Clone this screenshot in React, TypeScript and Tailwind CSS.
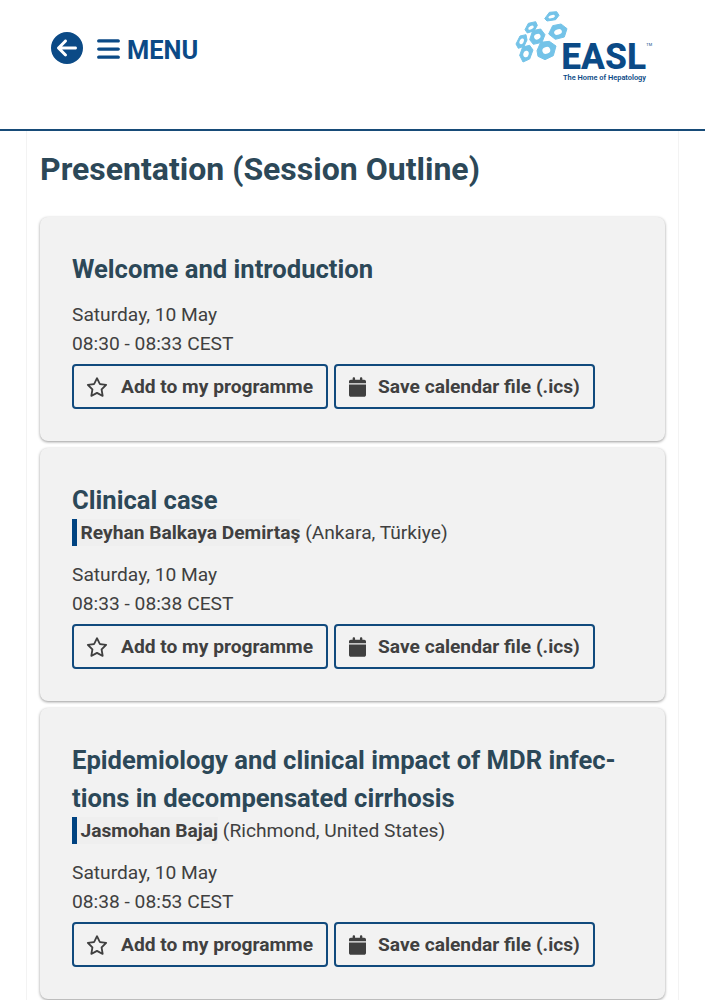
import { FaBars, FaCalendar, FaCircleArrowLeft, FaRegStar } from 'react-icons/fa6'

type Presentation = {
  id: number
  titleLines: string[]
  speaker?: string
  location?: string
  date: string
  time: string
}

const presentations: Presentation[] = [
  { id: 1, titleLines: ['Welcome and introduction'], date: 'Saturday, 10 May', time: '08:30 - 08:33 CEST' },
  { id: 2, titleLines: ['Clinical case'], speaker: 'Reyhan Balkaya Demirtaş', location: 'Ankara, Türkiye', date: 'Saturday, 10 May', time: '08:33 - 08:38 CEST' },
  {
    id: 3,
    titleLines: ['Epidemiology and clinical impact of MDR infec-', 'tions in decompensated cirrhosis'],
    speaker: 'Jasmohan Bajaj',
    location: 'Richmond, United States',
    date: 'Saturday, 10 May',
    time: '08:38 - 08:53 CEST',
  },
]

function Logo() {
  return (
    <svg viewBox="0 0 510 300" className="w-[170px] h-[100px]" role="img" aria-label="EASL">
      {/* Liver cell hexagons */}
      <g transform="translate(36 24)">
        <g fill="#74c3e8" stroke="#74c3e8" strokeWidth="3" strokeLinejoin="round">
          <path d="M98 32 112 13 134 11 141 22 131 35 105 39Z" />
          <path d="M39 65 49 46 71 41 76 52 67 68 46 75Z" />
          <path d="M110 78 122 53 147 48 165 62 157 87 130 94Z" />
          <path d="M53 95 62 68 86 63 99 80 90 103 64 109Z" />
          <path d="M12 108 24 84 42 80 45 96 36 115 19 121Z" />
          <path d="M75 128 86 103 112 100 132 114 124 143 99 155 78 145Z" />
          <path d="M23 142 32 117 53 112 63 126 53 153 33 162Z" />
        </g>
        <g fill="#fff">
          <ellipse cx="119" cy="26" rx="10" ry="4.5" transform="rotate(-18 119 26)" />
          <ellipse cx="57" cy="59" rx="9" ry="5" transform="rotate(-30 57 59)" />
          <ellipse cx="138" cy="72" rx="12" ry="8" transform="rotate(-20 138 72)" />
          <ellipse cx="76" cy="86" rx="10" ry="8" transform="rotate(-30 76 86)" />
          <ellipse cx="29" cy="100" rx="6" ry="9" transform="rotate(25 29 100)" />
          <ellipse cx="103" cy="127" rx="12" ry="10" transform="rotate(-20 103 127)" />
          <ellipse cx="42" cy="138" rx="8" ry="10" transform="rotate(15 42 138)" />
        </g>
      </g>
      <g fill="#0b4a86" className="font-['Roboto',sans-serif]">
        <text x="184" y="208" fontSize="108" fontWeight="800" textLength="254" lengthAdjust="spacingAndGlyphs">EASL</text>
        <text x="439" y="139" fontSize="11" textLength="17" lengthAdjust="spacingAndGlyphs">TM</text>
        <text x="189" y="239" fontSize="21" fontWeight="600" textLength="249" lengthAdjust="spacingAndGlyphs">The Home of Hepatology</text>
      </g>
    </svg>
  )
}

function PresentationCard({ item }: { item: Presentation }) {
  return (
    <article className="rounded-lg bg-[#f2f2f2] px-8 pt-[33px] pb-8 shadow-[0_1px_3px_rgba(0,0,0,0.4)]">
      <h2 className="text-[25.6px] leading-[38.4px] font-bold text-[#2c4858]">
        {item.titleLines.map((line) => <span key={line} className="block whitespace-nowrap">{line}</span>)}
      </h2>
      {item.speaker && (
        <p className="flex items-start h-[28.8px] text-[19.2px] leading-[28.8px] whitespace-pre">
          <span className="h-[27px] border-l-[5px] border-[#004381] bg-[#efefef] pl-[3.5px] font-bold">{item.speaker}</span>
          <span> ({item.location})</span>
        </p>
      )}
      <div className="mt-[12.8px] text-[19.2px] leading-[28.8px]">
        <div>{item.date}</div>
        <div>{item.time}</div>
      </div>
      <div className="mt-[5.6px] flex gap-[6px] text-[19.2px] font-bold">
        <button className="flex items-center w-[256px] h-[45px] rounded border-2 border-[#114a7d] pl-[12px] whitespace-nowrap">
          <FaRegStar className="mr-[13px] h-[20px] w-[22px] shrink-0" />
          <span className="pt-px">Add to my programme</span>
        </button>
        <button className="flex items-center w-[261px] h-[45px] rounded border-2 border-[#114a7d] pl-[13px] whitespace-nowrap">
          <FaCalendar className="mr-[12px] h-[20px] w-[17px] shrink-0" />
          <span className="pt-px">Save calendar file (.ics)</span>
        </button>
      </div>
    </article>
  )
}

export default function App() {
  return (
    <div className="h-[1000px] w-[705px] overflow-hidden bg-white font-['Roboto',sans-serif] text-[#404040]">
      <header className="flex h-[131px] items-start justify-between border-b-2 border-[#174b78] pl-[51px] pr-[35px]">
        <div className="mt-[29px] flex items-center text-[#0b4a86]">
          <FaCircleArrowLeft className="size-8" />
          <FaBars className="ml-[14px] mt-[3px] h-[26px] w-[23px]" />
          <span className="ml-[7px] mt-[5px] text-[25.4px] leading-8 font-bold">MENU</span>
        </div>
        <Logo />
      </header>

      <main className="mx-[26px] min-h-full border-x border-[#f3f3f3] px-[13px]">
        <h1 className="pt-[14px] text-[32px] leading-[48px] font-bold text-[#2c4858] whitespace-nowrap">Presentation (Session Outline)</h1>
        <div className="mt-[24px] flex flex-col gap-[6.5px]">
          {presentations.map((item) => <PresentationCard key={item.id} item={item} />)}
        </div>
      </main>
    </div>
  )
}
